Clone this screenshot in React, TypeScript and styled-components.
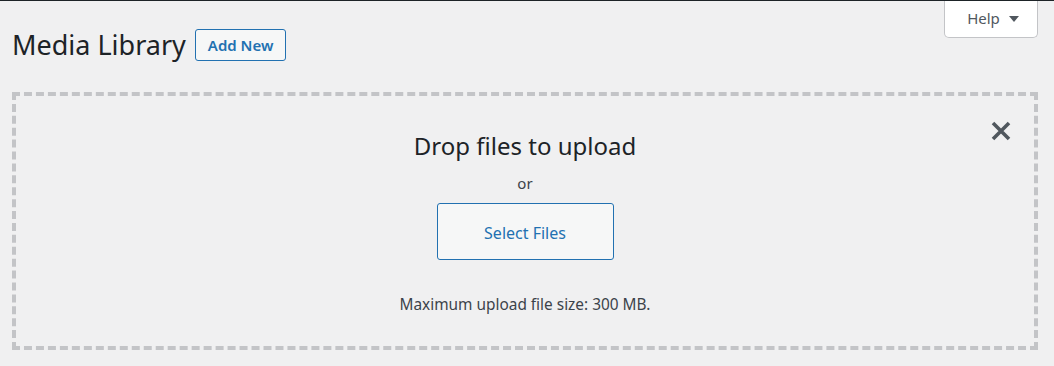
import React from "react";
import styled, { createGlobalStyle } from "styled-components";

const GlobalStyle = createGlobalStyle`
  html, body { margin: 0; padding: 0; }
  body {
    background: #f0f0f1;
    font-family: "Noto Sans", "Open Sans", sans-serif;
    color: #3c434a;
    font-size: 16px;
  }
  * { box-sizing: border-box; }
`;

const Page = styled.div`
  width: 1054px;
  height: 366px;
  overflow: hidden;
  border-top: 1px solid #1d2327;
`;

const TopRow = styled.div`
  display: flex;
  justify-content: space-between;
  align-items: flex-start;
  padding: 0 16px 0 12px;
`;

const TitleGroup = styled.div`
  display: flex;
  align-items: center;
  gap: 9px;
  margin-top: 26px;
`;

const Title = styled.h1`
  margin: 0;
  font-size: 27px;
  font-weight: 400;
  color: #1d2327;
  line-height: 36px;
`;

const OutlineButton = styled.button`
  font-family: inherit;
  font-size: 15px;
  font-weight: 600;
  color: #2271b1;
  background: #f6f7f7;
  border: 1px solid #2271b1;
  border-radius: 3px;
  height: 32px;
  padding: 0 12px;
  line-height: 30px;
`;

const HelpTab = styled.button`
  font-family: inherit;
  font-size: 15px;
  color: #50575e;
  background: #fff;
  border: 1px solid #c3c4c7;
  border-top: none;
  border-radius: 0 0 5px 5px;
  width: 94px;
  height: 37px;
  display: flex;
  align-items: center;
  justify-content: center;
  gap: 9px;
  padding: 0 0 2px 4px;
`;

const Caret = styled.span`
  width: 0;
  height: 0;
  border-left: 5px solid transparent;
  border-right: 5px solid transparent;
  border-top: 6px solid #50575e;
  margin-top: 1px;
`;

const DropZone = styled.div`
  position: relative;
  margin: 29px 16px 0 12px;
  height: 258px;
  border: 4px dashed #c3c4c7;
  display: flex;
  flex-direction: column;
  align-items: center;
`;

const CloseButton = styled.button`
  position: absolute;
  top: 25px;
  right: 23px;
  background: none;
  border: none;
  padding: 0;
  width: 20px;
  height: 20px;
  display: flex;
  align-items: center;
  justify-content: center;
`;

const DropTitle = styled.h2`
  margin: 34px 0 0;
  font-size: 24px;
  font-weight: 400;
  color: #1d2327;
  line-height: 32px;
`;

const Or = styled.p`
  margin: 9px 0 0;
  font-size: 15px;
  line-height: 24px;
  color: #3c434a;
`;

const HeroButton = styled(OutlineButton)`
  margin-top: 8px;
  font-size: 16px;
  font-weight: 400;
  width: 177px;
  height: 57px;
  line-height: 55px;
  padding: 2px 0 0;
`;

const Note = styled.p`
  margin: 33px 0 0;
  font-size: 15.4px;
  line-height: 24px;
  color: #3c434a;
`;

export default function App() {
  return (
    <Page>
      <GlobalStyle />
      <TopRow>
        <TitleGroup>
          <Title>Media Library</Title>
          <OutlineButton>Add New</OutlineButton>
        </TitleGroup>
        <HelpTab>
          Help <Caret />
        </HelpTab>
      </TopRow>
      <DropZone>
        <CloseButton aria-label="Close uploader">
          <svg width="20" height="20" viewBox="0 0 20 20">
            <path d="M2 2 L18 18 M18 2 L2 18" stroke="#50575e" strokeWidth="3.6" />
          </svg>
        </CloseButton>
        <DropTitle>Drop files to upload</DropTitle>
        <Or>or</Or>
        <HeroButton>Select Files</HeroButton>
        <Note>Maximum upload file size: 300 MB.</Note>
      </DropZone>
    </Page>
  );
}
